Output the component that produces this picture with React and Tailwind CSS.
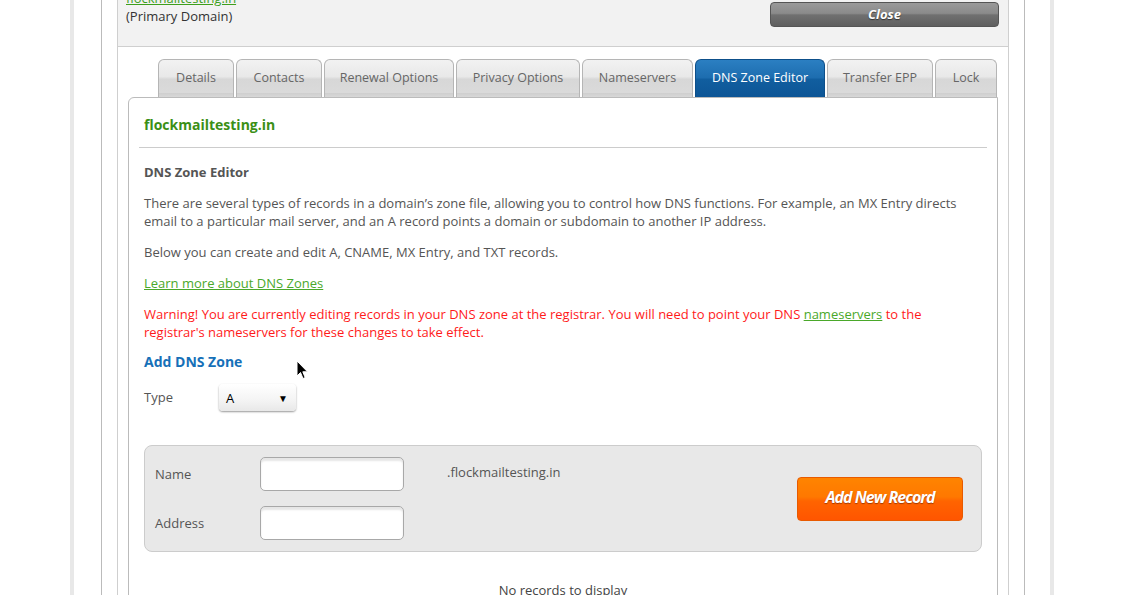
import React from "react";

const tabs = [
  { label: "Details", w: "w-[76px]" },
  { label: "Contacts", w: "w-[86px]" },
  { label: "Renewal Options", w: "w-[130px]" },
  { label: "Privacy Options", w: "w-[124px]" },
  { label: "Nameservers", w: "w-[111px]" },
  { label: "DNS Zone Editor", w: "w-[130px]", active: true },
  { label: "Transfer EPP", w: "w-[106px]" },
  { label: "Lock", w: "w-[62px]" },
];

const Tab = ({ label, w, active }) => (
  <div
    className={`${w} h-[38px] flex items-center justify-center pb-[1px] rounded-t-[6px] border border-b-0 text-[12.5px] ${
      active
        ? "border-[#0d4f8a] text-white bg-[linear-gradient(#2b7fc2,#1d6daf_48%,#115e9f_52%,#0d5596)]"
        : "border-[#b5b5b5] text-[#666] bg-[linear-gradient(#f2f2f2,#e8e8e8_45%,#d7d7d7_52%,#dadada_88%,#cfcfcf_90%,#d8d8d8)]"
    }`}
  >
    {label}
  </div>
);

const TextInput = () => (
  <div className="w-[144px] h-[34px] rounded-[5px] border border-[#a8a8a8] bg-white shadow-[inset_0_3px_2px_#e6e6e6]" />
);

const Cursor = () => (
  <svg
    className="absolute left-[296px] top-[360px]"
    width="13"
    height="20"
    viewBox="0 0 13 20"
  >
    <path
      d="M1 1 L1 16 L4.5 12.5 L7 18.5 L9.2 17.6 L6.8 11.8 L11.5 11.8 Z"
      fill="#000"
      stroke="#fff"
      strokeWidth="1"
      strokeLinejoin="round"
    />
  </svg>
);

export default function App() {
  return (
    <div className="relative w-[1139px] h-[595px] overflow-hidden bg-white font-['Open_Sans',sans-serif] text-[13px] text-[#555]">
      <div className="-mt-[20px] ml-[70px] w-[984px] h-[640px] border-x-4 border-[#e8e8e8] bg-white">
        <div className="ml-[27px] w-[924px] h-full border-x border-[#bbb]">
          <div className="mx-[15px] h-full border-x border-[#cfcfcf] bg-white">
            {/* header */}
            <div className="h-[67px] bg-[#f2f2f2] border-b border-[#cfcfcf] flex justify-between pl-[8px] pr-[9px] pt-[9px]">
              <div className="leading-[18px] text-[#333]">
                <a className="text-[#3e9f1c] underline">flockmailtesting.in</a>
                <div>(Primary Domain)</div>
              </div>
              <button className="mt-[13px] w-[229px] h-[25px] rounded-[4px] border border-[#555] bg-[linear-gradient(#9a9a9a,#8a8a8a_45%,#707070_52%,#5f5f5f)] text-white font-bold italic text-[13px] [text-shadow:0_1px_1px_#333]">
                Close
              </button>
            </div>

            {/* tabs + content */}
            <div className="px-[10px] pt-[12px]">
              <div className="flex gap-[2px] pl-[30px]">
                {tabs.map((t) => (
                  <Tab key={t.label} {...t} />
                ))}
              </div>

              <div className="border border-[#bbb] rounded-tl-[6px] bg-white px-[10px] pt-[18px] pb-[40px] leading-[18px]">
                <div className="px-[5px] text-[14px] font-bold text-[#3b8f16]">
                  flockmailtesting.in
                </div>
                <div className="mt-[13px] border-t border-[#ccc]" />

                <div className="px-[5px]">
                  <div className="mt-[15px] font-bold">DNS Zone Editor</div>
                  <p className="mt-[13px]">
                    There are several types of records in a domain’s zone file,
                    allowing you to control how DNS functions. For example, an MX
                    Entry directs email to a particular mail server, and an A
                    record points a domain or subdomain to another IP address.
                  </p>
                  <p className="mt-[13px]">
                    Below you can create and edit A, CNAME, MX Entry, and TXT
                    records.
                  </p>
                  <p className="mt-[13px]">
                    <a className="text-[#4aa82a] underline">
                      Learn more about DNS Zones
                    </a>
                  </p>
                  <p className="mt-[13px] text-[#ff1a1a]">
                    Warning! You are currently editing records in your DNS zone
                    at the registrar. You will need to point your DNS{" "}
                    <a className="text-[#4aa82a] underline">nameservers</a> to
                    the registrar's nameservers for these changes to take effect.
                  </p>

                  <h3 className="mt-[11px] text-[14px] leading-[20px] font-bold text-[#1670b8]">
                    Add DNS Zone
                  </h3>

                  <div className="mt-[12px] flex items-center">
                    <span className="w-[75px] -mt-[1px]">Type</span>
                    <div className="w-[77px] h-[27px] flex items-center justify-between pl-[7px] pr-[8px] rounded-[4px] bg-[linear-gradient(#ffffff,#f4f4f4_60%,#e8e8e8)] shadow-[0_1px_2px_#999] text-black">
                      <span>A</span>
                      <span className="text-[10px]">▼</span>
                    </div>
                  </div>

                  <div className="mt-[34px] h-[107px] rounded-[8px] border border-[#ccc] bg-[#e8e8e8] flex items-center pl-[10px] pr-[18px]">
                    <div className="flex flex-col gap-[15px]">
                      <div className="flex items-center">
                        <span className="w-[105px]">Name</span>
                        <TextInput />
                        <span className="ml-[43px] -mt-[4px]">
                          .flockmailtesting.in
                        </span>
                      </div>
                      <div className="flex items-center">
                        <span className="w-[105px]">Address</span>
                        <TextInput />
                      </div>
                    </div>
                    <button className="ml-auto w-[166px] h-[44px] pb-[3px] rounded-[4px] border border-[#e85a00] bg-[linear-gradient(#ff8400,#ff7800_45%,#ff6400_55%,#ff5500)] text-white font-bold italic text-[16px] tracking-[-1px] [text-shadow:0_1px_1px_#a33a00]">
                      Add New Record
                    </button>
                  </div>

                  <div className="mt-[29px] text-center text-[#444]">
                    No records to display
                  </div>
                </div>
              </div>
            </div>
          </div>
        </div>
      </div>
      <Cursor />
    </div>
  );
}
